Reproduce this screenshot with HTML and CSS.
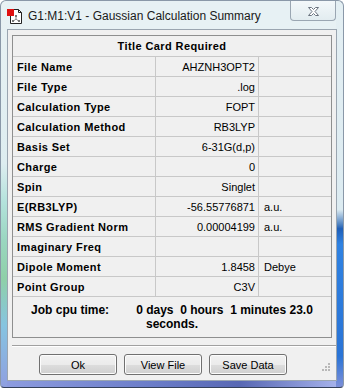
FILE: index.html
```html
<!DOCTYPE html>
<html lang="en">
<head>
  <meta charset="UTF-8" />
  <title>G1:M1:V1 - Gaussian Calculation Summary</title>
  <link rel="stylesheet" href="styles.css">
</head>
<body>
  <div class="window">
    <div class="titlebar">
      <svg class="app-icon" width="16" height="16" viewBox="0 0 16 16">
        <path d="M3.5 1.5 H11.5 L14.5 4.5 V15.5 H3.5 Z" fill="#fff" stroke="#222"/>
        <path d="M11.5 1.5 V4.5 H14.5" fill="none" stroke="#222"/>
        <rect x="0" y="1" width="7" height="7" fill="#e01010"/>
        <g stroke="#8a8a8a" stroke-width="1">
          <line x1="9" y1="8" x2="9" y2="11"/>
          <line x1="9" y1="11" x2="6.5" y2="13"/>
          <line x1="9" y1="11" x2="11.5" y2="13"/>
        </g>
        <g fill="#777">
          <rect x="8" y="7" width="2" height="2"/>
          <rect x="5" y="12" width="2" height="2"/>
          <rect x="11" y="12" width="2" height="2"/>
        </g>
      </svg>
      <span class="title">G1:M1:V1 - Gaussian Calculation Summary</span>
      <div class="close">
        <svg width="13" height="11" viewBox="0 0 13 11">
          <path d="M1.5 1.5 H4.5 L6.5 3.5 L8.5 1.5 H11.5 L8 5.5 L11.5 9.5 H8.5 L6.5 7.5 L4.5 9.5 H1.5 L5 5.5 Z" fill="#fff" stroke="#6b7480"/>
        </svg>
      </div>
    </div>

    <div class="client">
      <div class="summary">
        <div class="head">Title Card Required</div>
        <table class="grid">
          <colgroup><col class="c-label"><col class="c-value"><col></colgroup>
          <tr><td class="label">File Name</td><td class="value">AHZNH3OPT2</td><td></td></tr>
          <tr><td class="label">File Type</td><td class="value">.log</td><td></td></tr>
          <tr><td class="label">Calculation Type</td><td class="value">FOPT</td><td></td></tr>
          <tr><td class="label">Calculation Method</td><td class="value">RB3LYP</td><td></td></tr>
          <tr><td class="label">Basis Set</td><td class="value">6-31G(d,p)</td><td></td></tr>
          <tr><td class="label">Charge</td><td class="value">0</td><td></td></tr>
          <tr><td class="label">Spin</td><td class="value">Singlet</td><td></td></tr>
          <tr><td class="label">E(RB3LYP)</td><td class="value">-56.55776871</td><td class="unit">a.u.</td></tr>
          <tr><td class="label">RMS Gradient Norm</td><td class="value">0.00004199</td><td class="unit">a.u.</td></tr>
          <tr><td class="label">Imaginary Freq</td><td class="value"></td><td></td></tr>
          <tr><td class="label">Dipole Moment</td><td class="value">1.8458</td><td class="unit">Debye</td></tr>
          <tr><td class="label">Point Group</td><td class="value">C3V</td><td></td></tr>
        </table>
        <div class="cpu">Job cpu time:<span class="gap"></span>0 days&nbsp; 0 hours&nbsp; 1 minutes 23.0<br>seconds.</div>
      </div>

      <div class="sep"></div>

      <div class="actions">
        <button class="btn">Ok</button>
        <button class="btn">View File</button>
        <button class="btn">Save Data</button>
        <svg class="grip" width="12" height="12" viewBox="0 0 12 12">
          <g fill="#b8b8b8">
            <rect x="9" y="1" width="2" height="2"/>
            <rect x="6" y="4" width="2" height="2"/><rect x="9" y="4" width="2" height="2"/>
            <rect x="3" y="7" width="2" height="2"/><rect x="6" y="7" width="2" height="2"/><rect x="9" y="7" width="2" height="2"/>
          </g>
        </svg>
      </div>
    </div>
  </div>
</body>
</html>
```

FILE: styles.css
```css
* { box-sizing: border-box; }
body { margin: 0; background: #fff; font-family: "Liberation Sans", Arial, sans-serif; font-size: 11px; color: #000; }

.window {
  width: 344px; height: 388px;
  display: flex; flex-direction: column;
  border-radius: 6px 6px 4px 4px;
  border: 1px solid #8a98a8;
  border-bottom-color: #34405a;
  background:
    linear-gradient(to bottom, #e4eff3 0, #dcebf1 54%, #4a7fc0 58%, #1f5fb8 59%, #2f82e2 63%, #2a74d6 92%, #7d8fd8 100%) right top / 7px 100% no-repeat,
    linear-gradient(to bottom, #e9f2f4 0, #deedf0 42%, #b4e2dc 52%, #9ad6c0 62%, #8fd0a8 72%, #86c4e0 84%, #8f9fe0 100%) left top / 6px 100% no-repeat,
    linear-gradient(to right, #8e9de0, #6a7cc8 45%, #5868b4 70%, #aab6ee) left bottom / 100% 7px no-repeat,
    #e7f1f4;
}

.titlebar { height: 28px; display: flex; align-items: flex-start; }
.app-icon { margin: 7px 0 0 6px; }
.title { margin: 8px 0 0 5px; font-size: 12px; color: #1a1a1a; }
.close {
  margin-left: auto; margin-right: 7px;
  width: 46px; height: 20px;
  border: 1px solid #9aa6b2; border-top: none;
  border-radius: 0 0 4px 4px;
  background: linear-gradient(to bottom, #f3f8fa, #e2ecf0);
  display: flex; align-items: center; justify-content: center;
  padding-top: 2px;
}

.client {
  margin: 0 6px 0 6px;
  height: 352px;
  border: 1px solid #9aa5b0;
  background: #f0f0f0;
  display: flex; flex-direction: column;
}

.summary { margin: 5px 4px 0 4px; border: 1px solid #8e8f8f; }
.head { height: 21px; border-bottom: 1px solid #c8c8c8; text-align: center; font-weight: bold; line-height: 20px; letter-spacing: 0.4px; }

.grid { width: 100%; border-collapse: separate; border-spacing: 0; table-layout: fixed; }
.c-label { width: 143px; }
.c-value { width: 103px; }
.grid td {
  height: 20px; padding: 0;
  border-bottom: 1px solid #c8c8c8; border-right: 1px solid #c8c8c8;
  white-space: nowrap; overflow: hidden;
}
.grid td:last-child { border-right: none; }
.label { font-weight: bold; letter-spacing: 0.4px; padding-left: 4px !important; }
.value { text-align: right; padding-right: 3px !important; }
.unit { padding-left: 5px !important; }

.cpu { height: 40px; padding-top: 6px; text-align: center; font-weight: bold; font-size: 12px; line-height: 14px; }
.gap { display: inline-block; width: 27px; }

.sep { margin: 7px 0 0 4px; border-top: 1px solid #a0a0a0; border-bottom: 1px solid #fff; }

.actions { display: flex; align-items: flex-start; padding: 7px 5px 0 31px; flex: 1; }
.btn {
  width: 78px; height: 21px; margin-right: 7px;
  font-family: inherit; font-size: 11px; color: #000;
  border: 1px solid #707070; border-radius: 3px;
  background: linear-gradient(to bottom, #f2f2f2 0, #ebebeb 50%, #dddddd 51%, #cfcfcf 100%);
  box-shadow: inset 0 0 0 1px #fcfcfc;
  padding: 0;
}
.grip { margin-left: auto; align-self: flex-end; margin-bottom: 6px; }
```
